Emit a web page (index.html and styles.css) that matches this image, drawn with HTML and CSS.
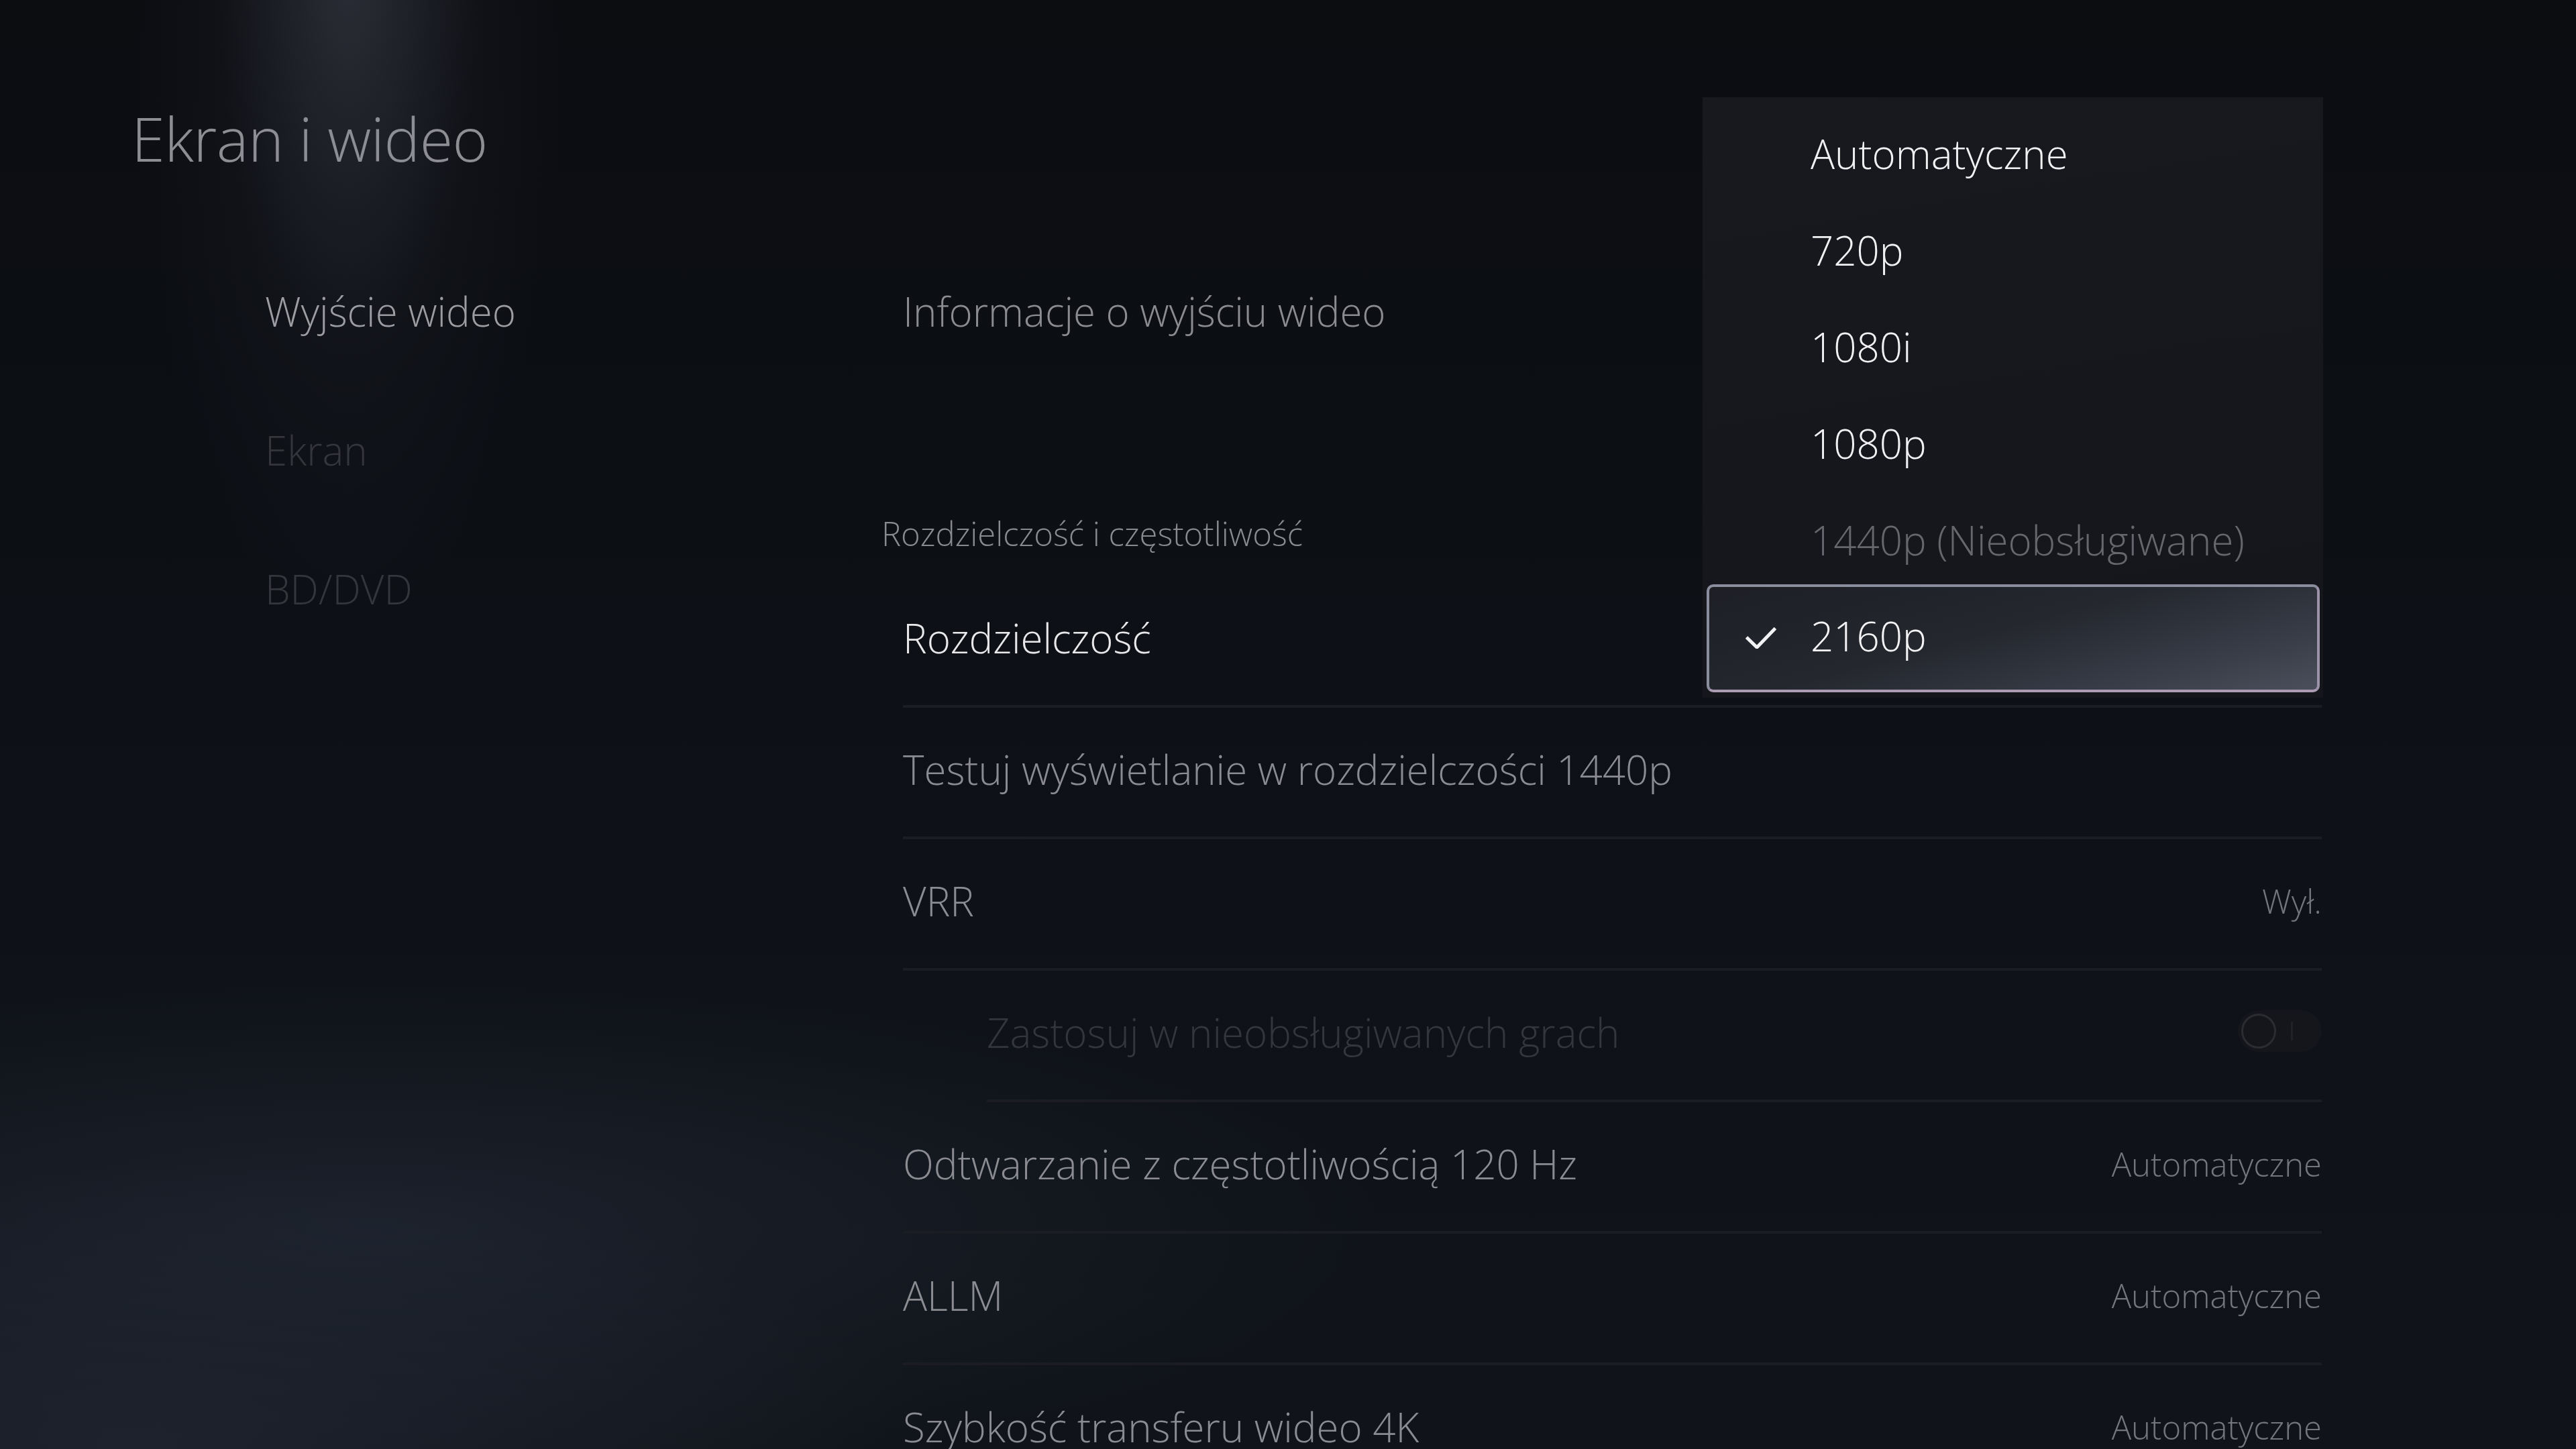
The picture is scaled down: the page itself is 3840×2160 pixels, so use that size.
FILE: index.html
```html
<!DOCTYPE html>
<html lang="pl">
<head>
<meta charset="utf-8">
<title>Ekran i wideo</title>
<link rel="stylesheet" href="styles.css">
</head>
<body>
<div class="screen">
  <aside class="side">
    <h1 class="title">Ekran i wideo</h1>
    <nav class="nav">
      <div class="nav-item active">Wyjście wideo</div>
      <div class="nav-item dim">Ekran</div>
      <div class="nav-item dim">BD/DVD</div>
    </nav>
  </aside>

  <main class="content">
    <div class="row solo"><span class="label">Informacje o wyjściu wideo</span></div>

    <div class="section">Rozdzielczość i częstotliwość</div>
    <div class="row focus"><span class="label">Rozdzielczość</span></div>
    <div class="row"><span class="label">Testuj wyświetlanie w rozdzielczości 1440p</span></div>
    <div class="row"><span class="label">VRR</span><span class="value">Wył.</span></div>
    <div class="row sub">
      <span class="label disabled">Zastosuj w nieobsługiwanych grach</span>
      <span class="toggle"><span class="knob"></span><span class="bar"></span></span>
    </div>
    <div class="row"><span class="label">Odtwarzanie z częstotliwością 120 Hz</span><span class="value">Automatyczne</span></div>
    <div class="row"><span class="label">ALLM</span><span class="value">Automatyczne</span></div>
    <div class="row"><span class="label">Szybkość transferu wideo 4K</span><span class="value">Automatyczne</span></div>
  </main>

  <div class="dropdown">
    <div class="opt">Automatyczne</div>
    <div class="opt">720p</div>
    <div class="opt">1080i</div>
    <div class="opt">1080p</div>
    <div class="opt off">1440p (Nieobsługiwane)</div>
    <div class="opt selected">
      <svg class="check" width="46" height="32" viewBox="0 0 46 32"><polyline points="1.5,15 17,30 44.5,1.5" fill="none" stroke="#f2f2f4" stroke-width="5"/></svg>
      <span>2160p</span>
    </div>
  </div>
</div>
</body>
</html>
```

FILE: styles.css
```css
html, body {
  margin: 0;
  padding: 0;
  background: #0c0e13;
}

.screen {
  position: relative;
  width: 3840px;
  height: 2160px;
  overflow: hidden;
  display: grid;
  grid-template-columns: 1346px 2115px 1fr;
  align-items: start;
  font-family: "Open Sans", "Noto Sans", sans-serif;
  font-weight: 300;
  background:
    radial-gradient(ellipse 330px 1000px at 520px -60px, rgba(70, 73, 86, 0.55), rgba(40, 42, 52, 0.15) 60%, rgba(0, 0, 0, 0) 100%),
    radial-gradient(ellipse 1500px 380px at 560px 1830px, rgba(38, 46, 60, 0.55), rgba(0, 0, 0, 0) 100%),
    radial-gradient(ellipse 1200px 420px at 200px 2160px, rgba(36, 42, 56, 0.6), rgba(0, 0, 0, 0) 100%),
    linear-gradient(180deg, #0b0d11 0%, #0e1117 60%, #10141a 100%);
}

/* left column */
.side {
  padding: 145px 0 0 196px;
}

.title {
  margin: 0;
  font-size: 90px;
  font-weight: 300;
  line-height: 1.362;
  color: #8d8e93;
  letter-spacing: -0.5px;
}

.nav {
  margin-top: 93px;
  padding-left: 199px;
}

.nav-item {
  height: 207px;
  line-height: 207px;
  font-size: 60px;
  white-space: nowrap;
  color: #9c9da2;
}

.nav-item.dim {
  color: #34363c;
}

/* right column */
.content {
  padding-top: 372px;
}

.row {
  display: flex;
  align-items: center;
  justify-content: space-between;
  height: 184px;
  padding-bottom: 8px;
  box-sizing: content-box;
  border-bottom: 4px solid #1b1d23;
  font-size: 60px;
  white-space: nowrap;
}

.row .label {
  color: #8b8c91;
}

.row.solo {
  border-bottom-color: transparent;
}

.row.focus .label {
  color: #e8e8eb;
}

.row.sub {
  margin-left: 125px;
}

.label.disabled {
  color: #34363c;
}

.value {
  font-size: 49px;
  color: #75767c;
}

.section {
  margin: 195px 0 0 -32px;
  font-size: 49px;
  line-height: 60px;
  padding-top: 2px;
  color: #8a8b90;
  height: 94px;
}

/* toggle */
.toggle {
  position: relative;
  width: 125px;
  height: 62px;
  border-radius: 31px;
  background: #15161b;
  display: flex;
  align-items: center;
  margin-top: -4px;
}

.knob {
  width: 46px;
  height: 46px;
  margin-left: 5px;
  border-radius: 50%;
  border: 3px solid #2a2c32;
}

.bar {
  width: 3px;
  height: 28px;
  margin-left: 22px;
  background: #202228;
}

/* dropdown overlay */
.dropdown {
  position: absolute;
  left: 2538px;
  top: 145px;
  width: 925px;
  height: 895px;
  box-sizing: border-box;
  padding: 12px 0 8px;
  background: linear-gradient(170deg, #18191e 0%, #16171c 60%, #15161b 100%);
  display: flex;
  flex-direction: column;
}

.opt {
  height: 144px;
  flex: none;
  display: flex;
  align-items: center;
  padding-left: 161px;
  font-size: 60px;
  color: #f1f1f3;
  white-space: nowrap;
}

.opt.off {
  color: #66676d;
}

.opt.selected {
  position: relative;
  height: 145px;
  margin: -6px 5px 0 6px;
  padding: 0 0 8px 54px;
  border: 4px solid #898d9d;
  border-right-color: #9c93aa;
  border-bottom-color: #ab9bb3;
  border-radius: 10px;
  background: linear-gradient(165deg, #1d1f25 0%, #24272e 45%, #3a3e49 80%, #4b4f5b 100%);
  color: #f3f3f5;
}

.check {
  margin-right: 51px;
  margin-top: 6px;
}
```
